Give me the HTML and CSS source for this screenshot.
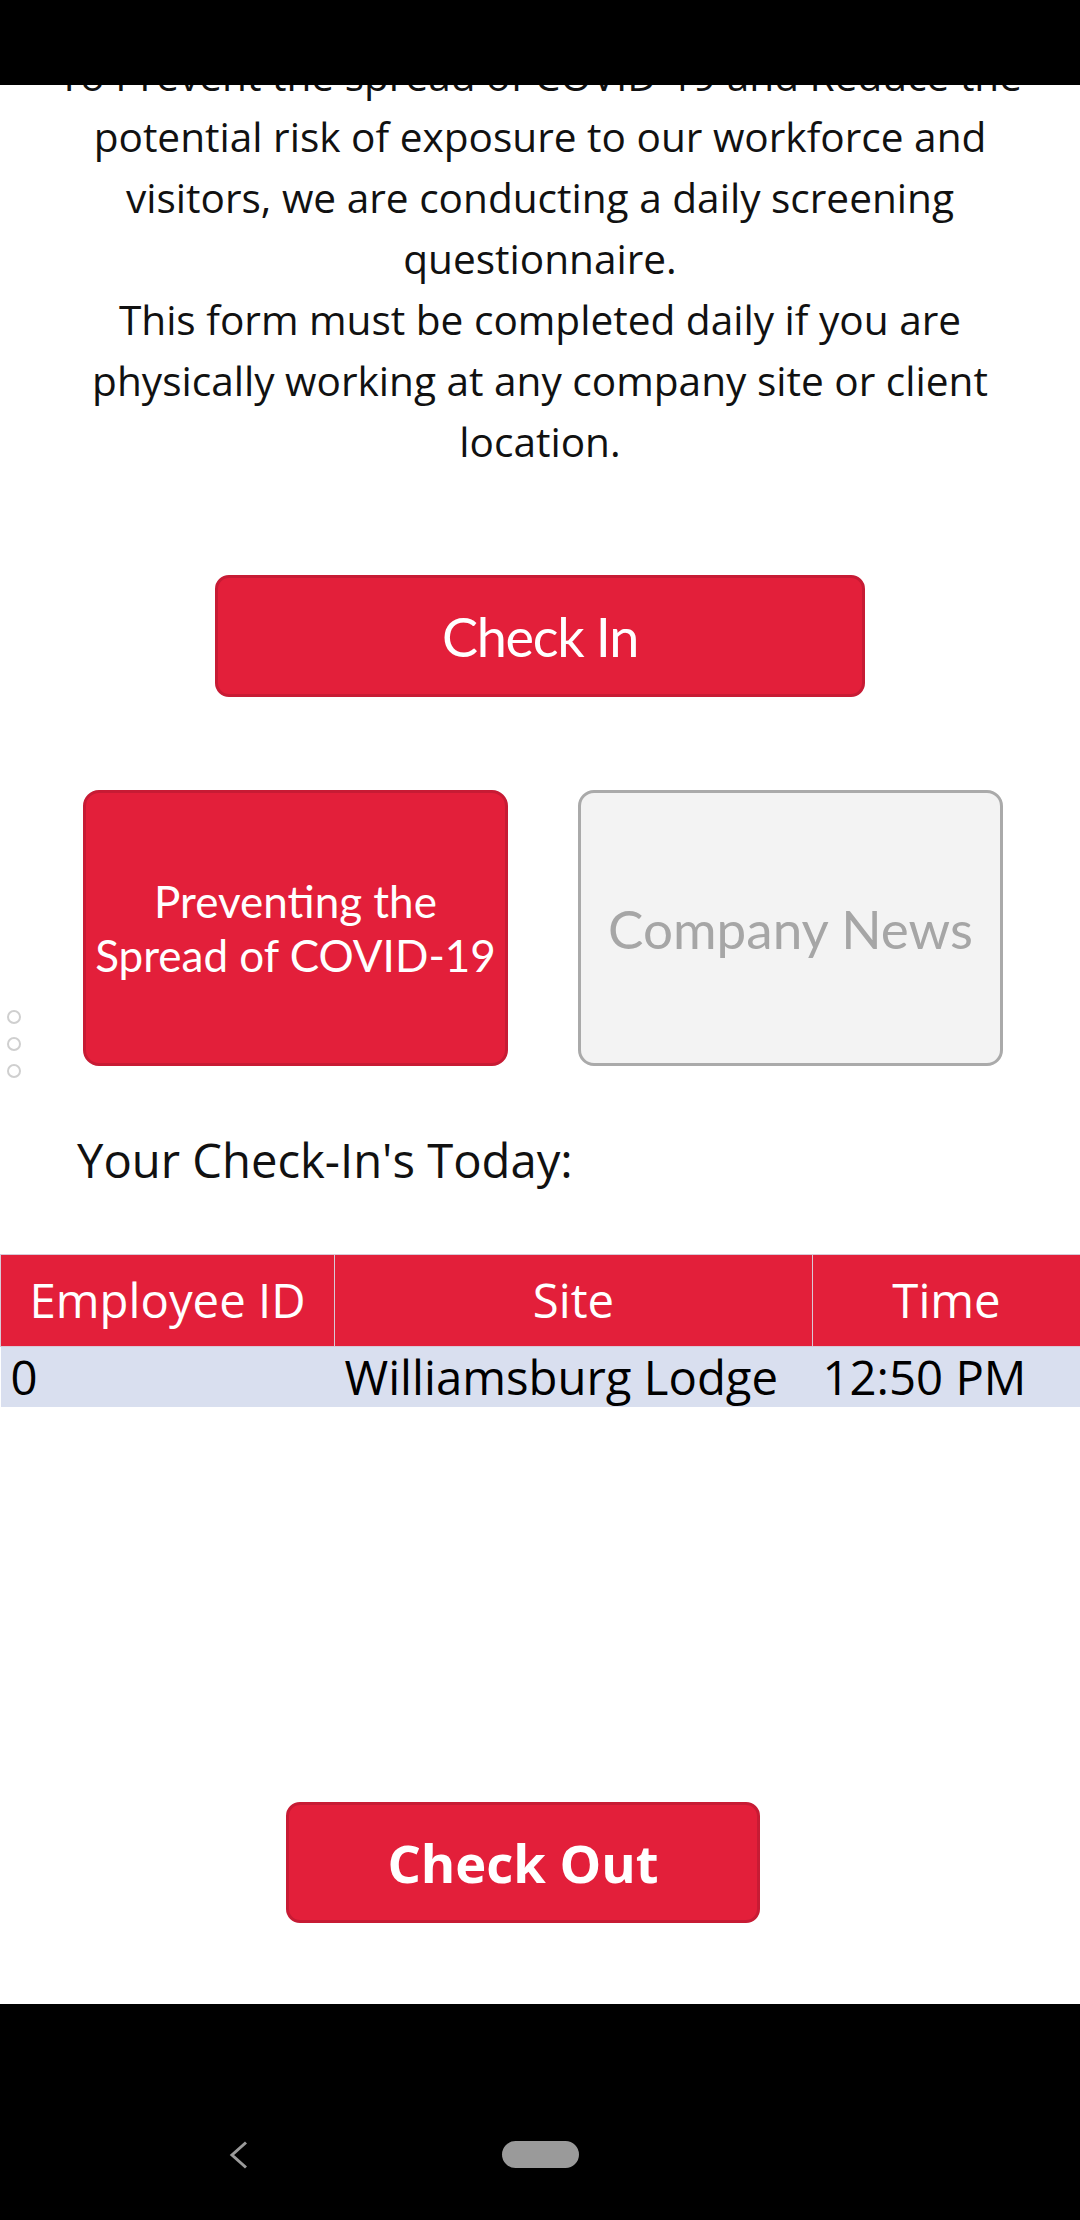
FILE: index.html
```html
<!DOCTYPE html>
<html lang="en">
<head>
    <meta charset="UTF-8">
    <meta name="viewport" content="width=device-width, initial-scale=1.0">
    <title>Daily Check In</title>
    <link rel="stylesheet" href="styles.css">
</head>
<body>

    <!-- status bar -->
    <div class="status-bar"></div>

    <main class="screen">
        <p class="intro">To Prevent the spread of COVID-19 and Reduce the potential risk of exposure to our workforce and visitors, we are conducting a daily screening questionnaire.<br>This form must be completed daily if you are physically working at any company site or client location.</p>

        <button class="btn btn-checkin">Check In</button>

        <div class="tiles">
            <div class="tile tile-red">Preventing the<br>Spread of COVID-19</div>
            <div class="tile tile-grey">Company News</div>
        </div>

        <h2 class="today-title">Your Check-In's Today:</h2>

        <table class="checkins">
            <thead>
                <tr>
                    <th class="col-id">Employee ID</th>
                    <th class="col-site">Site</th>
                    <th class="col-time">Time</th>
                </tr>
            </thead>
            <tbody>
                <tr>
                    <td>0</td>
                    <td>Williamsburg Lodge</td>
                    <td>12:50 PM</td>
                </tr>
            </tbody>
        </table>

        <button class="btn btn-checkout">Check Out</button>

        <!-- page dots -->
        <div class="pager">
            <span></span>
            <span></span>
            <span></span>
        </div>
    </main>

    <!-- android nav -->
    <div class="nav-bar">
        <svg class="nav-back" width="20" height="30" viewBox="0 0 20 30">
            <path d="M17 2.5 L3 15 L17 27.5" fill="none" stroke="#9a9a9a" stroke-width="3"/>
        </svg>
        <span class="home-pill"></span>
    </div>

</body>
</html>
```

FILE: styles.css
```css
body {
    margin: 0;
    background: #000;
    font-family: "Open Sans", Arial, sans-serif;
}
.status-bar {
    height: 85px;
    background: #000;
}
.screen {
    position: relative;
    height: 1919px;
    overflow: hidden;
    background: #fff;
}
.intro {
    margin: -40px 48px 0;
    font-size: 40.6px;
    line-height: 61px;
    text-align: center;
    color: #111;
}
.btn {
    display: block;
    box-sizing: border-box;
    background: #e31f3a;
    color: #fff;
    border: 3px solid #c71b34;
    border-radius: 14px;
    padding: 0;
}
.btn-checkin {
    width: 650px;
    height: 122px;
    margin: 103px auto 0;
    font-family: Lato, "Open Sans", sans-serif;
    font-size: 54px;
    letter-spacing: -1.3px;
}
.btn-checkout {
    width: 474px;
    height: 121px;
    margin: 395px 0 0 286px;
    font-family: "Open Sans", Arial, sans-serif;
    font-weight: 700;
    font-size: 52.5px;
}
.tiles {
    display: flex;
    gap: 70px;
    margin-top: 93px;
    padding-left: 83px;
}
.tile {
    box-sizing: border-box;
    width: 425px;
    height: 276px;
    display: flex;
    align-items: center;
    justify-content: center;
    text-align: center;
    border-radius: 16px;
    font-family: Lato, "Open Sans", sans-serif;
}
.tile-red {
    background: #e31f3a;
    border: 3px solid #c71b34;
    color: #fff;
    font-size: 44px;
    line-height: 54px;
}
.tile-grey {
    background: #f3f3f3;
    border: 3px solid #aaa;
    color: #a6a6a6;
    font-size: 53px;
}
.today-title {
    margin: 63px 0 0 77px;
    font-size: 47.2px;
    font-weight: 400;
    line-height: 62px;
    color: #111;
}
.checkins {
    width: 100%;
    margin-top: 63px;
    border-collapse: collapse;
    table-layout: fixed;
    font-size: 47.3px;
}
.col-id {
    width: 333px;
}
.col-site {
    width: 477px;
}
.checkins th {
    background: #e31f3a;
    color: #fff;
    font-weight: 400;
    line-height: 62px;
    padding: 14px 0 15px;
    border: 1px solid #d8c8d6;
}
.checkins th:last-child {
    border-right: none;
}
.checkins td {
    background: #d9dfef;
    color: #000;
    line-height: 60px;
    padding: 0 10px;
    border-top: 1px solid #c2b5cb;
    white-space: nowrap;
}
.pager {
    position: absolute;
    left: 7px;
    top: 925px;
    display: flex;
    flex-direction: column;
    gap: 13px;
}
.pager span {
    box-sizing: border-box;
    width: 14px;
    height: 14px;
    border: 2.5px solid #cfcfcf;
    border-radius: 50%;
}
.nav-bar {
    height: 216px;
    display: flex;
    align-items: flex-start;
    padding: 136px 0 0 229px;
    box-sizing: border-box;
}
.home-pill {
    width: 77px;
    height: 27px;
    margin: 1px 0 0 253px;
    border-radius: 14px;
    background: #9a9a9a;
}
```
